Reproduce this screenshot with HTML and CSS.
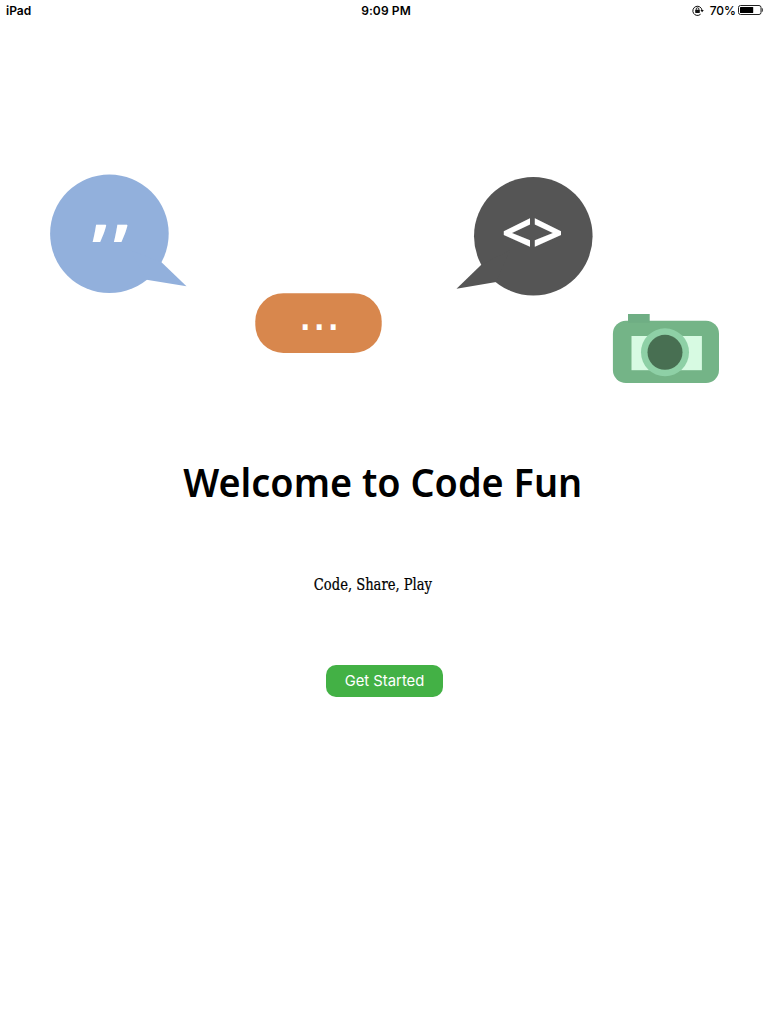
FILE: index.html
```html
<!DOCTYPE html>
<html lang="en">
<head>
<meta charset="utf-8">
<title>Code Fun</title>
<link rel="stylesheet" href="styles.css">
</head>
<body>
<header class="status">
  <span class="device">iPad</span>
  <span class="time">9:09 PM</span>
  <span class="power">
    <svg class="lock" width="12" height="12" viewBox="0 0 12 12"><path d="M10 5.2A4.6 4.6 0 1 0 8.6 9.2" fill="none" stroke="#111" stroke-width="1"/><path d="M8.4 5h3.4l-1.7 2.3z" fill="#111"/><rect x="3.2" y="4.8" width="4.6" height="3.2" rx=".4" fill="#111"/><path d="M4.2 5V4.1a1.35 1.35 0 0 1 2.7 0V5" fill="none" stroke="#111" stroke-width=".9"/></svg>
    <span class="percent">70%</span>
    <svg class="battery" width="26" height="10" viewBox="0 0 26 10"><rect x=".5" y=".5" width="22.5" height="9" rx="2" fill="none" stroke="#222"/><rect x="2" y="2" width="13.2" height="6" rx=".5"/><path d="M24.1 3.2q1.2 1.8 0 3.6z" fill="#222" stroke="#222" stroke-width=".5"/></svg>
  </span>
</header>
<main class="welcome">
  <svg class="scene" width="768" height="260" viewBox="0 140 768 260">
    <g fill="#92b0dc"><circle cx="109.4" cy="233.7" r="59.3"/><path d="M161.5 262.3L186.5 286.3L146.5 279.7L130 250z"/></g>
    <text class="mark quote" x="90.4 111.7" y="232.8">,,</text>
    <rect x="255.3" y="293.2" width="126.4" height="59.8" rx="28" fill="#d8874d"/>
    <text class="mark dots" x="298.3" y="330.4">...</text>
    <g fill="#555"><circle cx="533.3" cy="236.2" r="59.3"/><path d="M481.3 264.7L456.5 288.8L496.2 282L510 250z"/></g>
    <text class="mark code" x="501.5" y="251.8">&lt;&gt;</text>
    <rect x="612.9" y="320.8" width="106.1" height="62.3" rx="13" fill="#74b487"/>
    <rect x="628" y="314" width="21.7" height="8.8" fill="#6fae84"/>
    <rect x="631.5" y="336" width="70.4" height="34.2" fill="#d7fae2"/>
    <circle cx="665" cy="352.3" r="24" fill="#8ed0a6"/>
    <circle cx="665" cy="352.3" r="17.5" fill="#486f52"/>
  </svg>
  <h1 class="title">Welcome to Code Fun</h1>
  <p class="tagline">Code, Share, Play</p>
  <button class="start">Get Started</button>
</main>
</body>
</html>
```
FILE: styles.css
```css
body { margin: 0; height: 1024px; background: #fff; color: #000; font-family: Inter, sans-serif; }
.status { height: 22px; padding: 0 4px 0 6px; display: grid; grid-template-columns: 1fr auto 1fr; align-items: center; font-size: 12px; line-height: 22px; font-weight: 600; }
.time { padding-left: 2px; letter-spacing: .1px; }
.power { display: flex; justify-content: flex-end; align-items: center; }
.lock { margin: 0 6px 1px 0; }
.percent { margin-right: 2px; font-weight: 500; }
.battery { margin-bottom: 2px; }
.welcome { padding-top: 118px; display: flex; flex-direction: column; align-items: center; }
.scene { display: block; overflow: visible; }
.mark { fill: #fff; font-family: "Open Sans", sans-serif; }
.quote { font-size: 70px; font-weight: 700; }
.dots { font-family: "DejaVu Sans", sans-serif; font-size: 44px; stroke: #fff; stroke-width: .2px; }
.code { font-size: 54px; font-weight: 700; }
.title { margin: 56px 2px 0 0; font: 600 39px/52px "Noto Sans", sans-serif; white-space: nowrap; transform: scaleX(.97); }
.tagline { margin: 65px 22px 0 0; font: 16px/24px "DejaVu Serif Condensed", "DejaVu Serif", serif; white-space: nowrap; transform: scaleX(.91); -webkit-text-stroke: .2px #000; }
.start { margin: 68px 0 0 1px; width: 117px; height: 32px; padding: 0; border: 0; border-radius: 10px; background: #43b145; color: #fff; font: 400 14.8px/32px Inter, sans-serif; }
```
